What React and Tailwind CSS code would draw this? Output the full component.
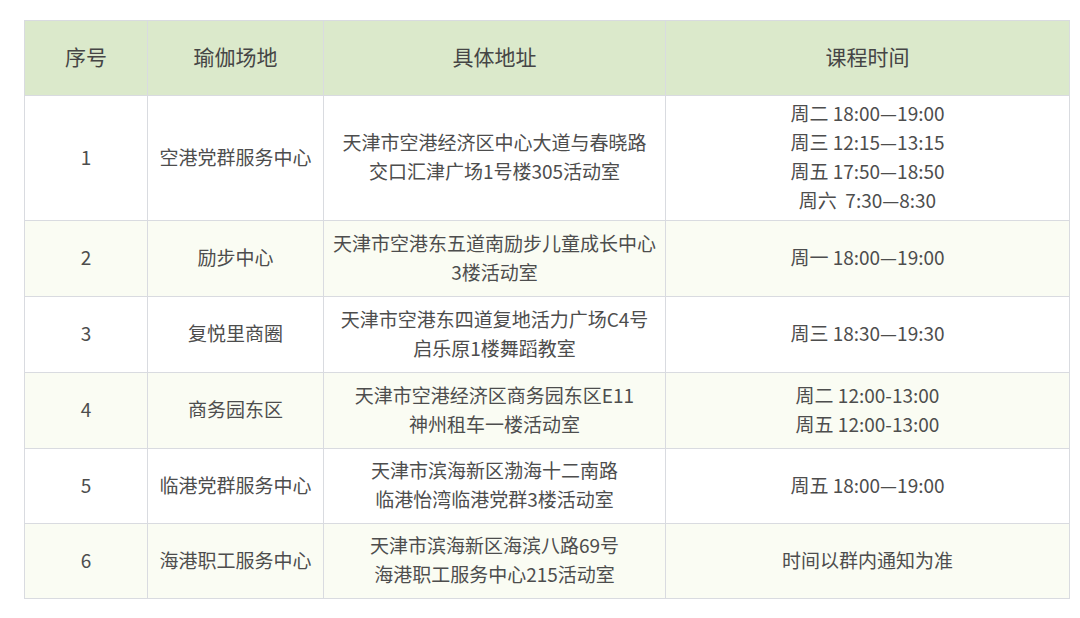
import React from "react";

const rows = [
  {
    no: "1",
    place: "空港党群服务中心",
    addr: ["天津市空港经济区中心大道与春晓路", "交口汇津广场1号楼305活动室"],
    time: ["周二 18:00—19:00", "周三 12:15—13:15", "周五 17:50—18:50", "周六  7:30—8:30"],
    h: "h-[125px]",
  },
  {
    no: "2",
    place: "励步中心",
    addr: ["天津市空港东五道南励步儿童成长中心", "3楼活动室"],
    time: ["周一 18:00—19:00"],
    h: "h-[76px]",
  },
  {
    no: "3",
    place: "复悦里商圈",
    addr: ["天津市空港东四道复地活力广场C4号", "启乐原1楼舞蹈教室"],
    time: ["周三 18:30—19:30"],
    h: "h-[76px]",
  },
  {
    no: "4",
    place: "商务园东区",
    addr: ["天津市空港经济区商务园东区E11", "神州租车一楼活动室"],
    time: ["周二 12:00-13:00", "周五 12:00-13:00"],
    h: "h-[76px]",
  },
  {
    no: "5",
    place: "临港党群服务中心",
    addr: ["天津市滨海新区渤海十二南路", "临港怡湾临港党群3楼活动室"],
    time: ["周五 18:00—19:00"],
    h: "h-[75px]",
  },
  {
    no: "6",
    place: "海港职工服务中心",
    addr: ["天津市滨海新区海滨八路69号", "海港职工服务中心215活动室"],
    time: ["时间以群内通知为准"],
    h: "h-[75px]",
  },
];

const cell = "border border-[#d9dbe0] text-center align-middle px-0 pt-0 pb-[4px]";

export default function App() {
  return (
    <div className="w-[1080px] h-[618px] bg-white pt-[20px] pl-[24px] font-['Noto_Sans_CJK_SC',sans-serif] text-[19px] leading-[29px] text-[#4d4d4d]">
      <table className="border-collapse w-[1045px] table-fixed">
        <colgroup>
          <col className="w-[123px]" />
          <col className="w-[176px]" />
          <col className="w-[342px]" />
          <col className="w-[404px]" />
        </colgroup>
        <thead>
          <tr className="h-[75px] bg-[#dbe9cb] text-[21px] text-[#454545]">
            <th className={`${cell} font-normal`}>序号</th>
            <th className={`${cell} font-normal`}>瑜伽场地</th>
            <th className={`${cell} font-normal`}>具体地址</th>
            <th className={`${cell} font-normal`}>课程时间</th>
          </tr>
        </thead>
        <tbody>
          {rows.map((r, i) => (
            <tr key={r.no} className={`${r.h} ${i % 2 === 1 ? "bg-[#fafcf3]" : "bg-white"}`}>
              <td className={cell}>{r.no}</td>
              <td className={cell}>{r.place}</td>
              <td className={cell}>
                {r.addr.map((l) => (
                  <div key={l}>{l}</div>
                ))}
              </td>
              <td className={`${cell} whitespace-pre`}>
                {r.time.map((l) => (
                  <div key={l}>{l}</div>
                ))}
              </td>
            </tr>
          ))}
        </tbody>
      </table>
    </div>
  );
}
